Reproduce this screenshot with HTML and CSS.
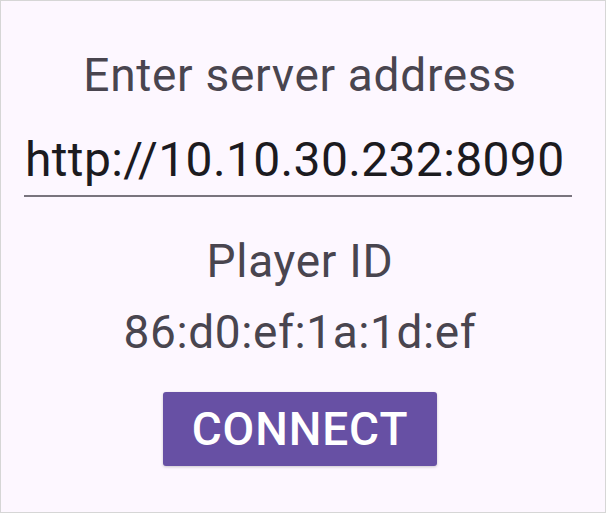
FILE: index.html
```html
<!DOCTYPE html>
<html lang="en">

<head>
    <meta charset="UTF-8">
    <meta name="viewport" content="width=device-width, initial-scale=1.0">
    <title>Connect</title>
    <link rel="stylesheet" href="styles.css">
</head>

<body>
    <div class="screen">
        <div class="label">Enter server address</div>
        <div class="field">
            <input class="address" type="text" value="http://10.10.30.232:8090">
        </div>
        <div class="label player">Player ID</div>
        <div class="player-id">86:d0:ef:1a:1d:ef</div>
        <button class="connect">CONNECT</button>
    </div>
</body>

</html>
```

FILE: styles.css
```css
*,
*::before,
*::after {
    box-sizing: border-box;
    font-family: Roboto, "Noto Sans", sans-serif;
}

body {
    margin: 0;
    padding: 0;
    background: #ffffff;
}

.screen {
    width: 606px;
    height: 513px;
    border: 1px solid #d6d6d6;
    background-color: #fdf7ff;
    display: flex;
    flex-direction: column;
    align-items: center;
    padding: 46px 6px 0 0;
}

.label {
    font-size: 46px;
    line-height: 56px;
    letter-spacing: 0.7px;
    color: #49454f;
}

.field {
    width: 548px;
    align-self: flex-start;
    margin: 29px 0 0 23px;
    padding-bottom: 7px;
    border-bottom: 2px solid #79747e;
}

.address {
    width: 100%;
    border: none;
    outline: none;
    background: transparent;
    font-size: 48px;
    letter-spacing: 0.35px;
    line-height: 56px;
    height: 56px;
    padding: 0 0 0 1px;
    color: #1c1b1f;
}

.player {
    margin-top: 36px;
}

.player-id {
    font-size: 46px;
    line-height: 56px;
    letter-spacing: 0.6px;
    margin-top: 15px;
    color: #49454f;
}

.connect {
    margin-top: 32px;
    width: 274px;
    height: 74px;
    border: none;
    border-radius: 3px;
    background-color: #6750a4;
    color: #ffffff;
    font-size: 46px;
    font-weight: 500;
    letter-spacing: 0.9px;
    box-shadow: 0 1px 3px rgba(0, 0, 0, 0.2);
}
```
